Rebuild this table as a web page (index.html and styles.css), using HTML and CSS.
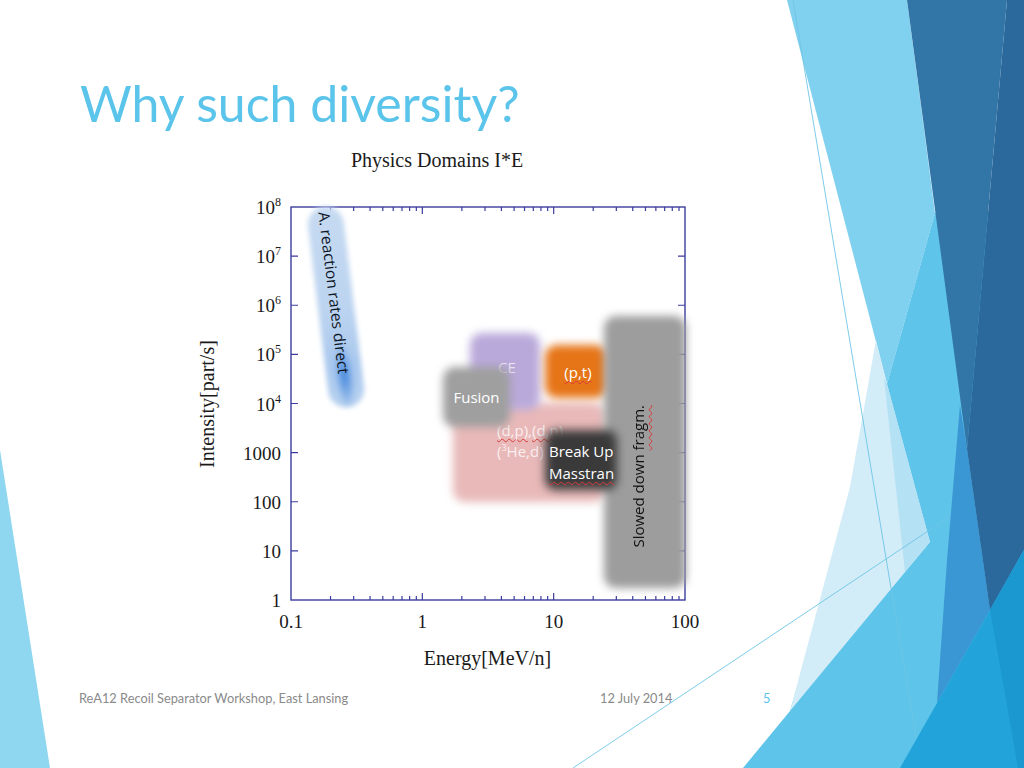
FILE: index.html
```html
<!DOCTYPE html>
<html lang="en">
<head>
<meta charset="utf-8">
<title>Why such diversity?</title>
<link rel="stylesheet" href="styles.css">
</head>
<body>
<div class="slide">
  <svg class="deco" viewBox="0 0 1024 768" width="1024" height="768" aria-hidden="true">
    <polygon points="0,450 50,768 0,768" fill="#8fd6f1"/>
    <polygon points="787,0 907,0 935,213 887,384" fill="#80d0ef"/>
    <polygon points="935,213 1024,213 1024,768 743,768 790,711 887,384" fill="#5ec4ea"/>
    <polygon points="876,340 887,384 930,542 790,711 850,487" fill="#d2ecf8"/>
    <polygon points="884,378 887,384 930,542 905,572" fill="#b4e1f4"/>
    <line x1="793" y1="0" x2="921" y2="768" stroke="#6fc5e7" stroke-width="0.9"/>
    <line x1="573" y1="768" x2="1024" y2="467" stroke="#6fc5e7" stroke-width="0.9"/>
    <polygon points="960,405 967,449 990,610 937,703 947,560" fill="#3b97d3"/>
    <polygon points="907,0 1007,0 967,449" fill="#3275a7"/>
    <polygon points="1007,0 1024,0 1024,550 990,610 967,449" fill="#2b699c"/>
    <polygon points="900,768 990,610 1024,550 1024,768" fill="#22a4db"/>
    <polygon points="990,610 1024,550 1024,768 1018,768" fill="#1c98d0"/>
  </svg>

  <main class="content">
    <h1 class="title">Why such diversity?</h1>

    <figure class="chart">
      <svg class="axes" width="520" height="540" viewBox="0 0 520 540">
        <text class="chart-title" x="247" y="27">Physics Domains I*E</text>
        <rect x="101" y="67" width="394" height="393" fill="none" stroke="#3c3c9e" stroke-width="1.4"/>
        <path stroke="#3c3c9e" stroke-width="1.2" fill="none" d="
          M140.53 460v-4M163.66 460v-4M180.07 460v-4M192.8 460v-4M203.19 460v-4M211.98 460v-4M219.6 460v-4M226.32 460v-4
          M271.86 460v-4M294.99 460v-4M311.4 460v-4M324.13 460v-4M334.52 460v-4M343.31 460v-4M350.93 460v-4M357.65 460v-4
          M403.2 460v-4M426.33 460v-4M442.74 460v-4M455.47 460v-4M465.86 460v-4M474.65 460v-4M482.27 460v-4M488.99 460v-4
          M140.53 67v4M163.66 67v4M180.07 67v4M192.8 67v4M203.19 67v4M211.98 67v4M219.6 67v4M226.32 67v4
          M271.86 67v4M294.99 67v4M311.4 67v4M324.13 67v4M334.52 67v4M343.31 67v4M350.93 67v4M357.65 67v4
          M403.2 67v4M426.33 67v4M442.74 67v4M455.47 67v4M465.86 67v4M474.65 67v4M482.27 67v4M488.99 67v4
          M232.33 460v-7M363.67 460v-7M232.33 67v7M363.67 67v7
          M101 410.88h7M101 361.75h7M101 312.63h7M101 263.5h7M101 214.38h7M101 165.25h7M101 116.13h7
          M495 410.88h-7M495 361.75h-7M495 312.63h-7M495 263.5h-7M495 214.38h-7M495 165.25h-7M495 116.13h-7"/>
        <g class="ylab">
          <text x="91" y="467">1</text>
          <text x="91" y="417.9">10</text>
          <text x="91" y="368.8">100</text>
          <text x="91" y="319.6">1000</text>
          <text x="91" y="270.5">10<tspan class="sup" dy="-8">4</tspan></text>
          <text x="91" y="221.4">10<tspan class="sup" dy="-8">5</tspan></text>
          <text x="91" y="172.3">10<tspan class="sup" dy="-8">6</tspan></text>
          <text x="91" y="123.1">10<tspan class="sup" dy="-8">7</tspan></text>
          <text x="91" y="74">10<tspan class="sup" dy="-8">8</tspan></text>
        </g>
        <g class="xlab">
          <text x="101" y="488">0.1</text>
          <text x="232.33" y="488">1</text>
          <text x="363.67" y="488">10</text>
          <text x="495" y="488">100</text>
        </g>
        <text class="axis-title" x="297.5" y="525">Energy[MeV/n]</text>
        <text class="axis-title" x="24" y="264" transform="rotate(-90 24 264)">Intensity[part/s]</text>
      </svg>

      <div class="blob pill"><span class="pill-text">A. reaction rates direct</span></div>
      <div class="blob pink">
        <span class="blob-text pink-text"><span class="sq">(d,p)</span>,<span class="sq">(d,n)</span><br>(<sup>3</sup>He,d)</span>
      </div>
      <div class="blob purple"><span class="blob-text ce">CE</span></div>
      <div class="blob orange"><span class="blob-text"><span class="sq">(p,t)</span></span></div>
      <div class="blob column"><span class="column-text">Slowed down <span class="sq">fragm.</span></span></div>
      <div class="blob fusion"><span class="blob-text">Fusion</span></div>
      <div class="blob dark"><span class="blob-text dark-text">Break Up<br><span class="sq">Masstran</span></span></div>
    </figure>

    <footer class="footer">
      <span>ReA12 Recoil Separator Workshop, East Lansing</span>
      <span>12 July 2014</span>
      <span class="num">5</span>
    </footer>
  </main>
</div>
</body>
</html>
```

FILE: styles.css
```css
* { box-sizing: border-box; }
html, body { margin: 0; padding: 0; }
body { background: #ffffff; }

.slide {
  position: relative;
  width: 1024px;
  height: 768px;
  overflow: hidden;
  background: #ffffff;
}

.deco {
  position: absolute;
  left: 0;
  top: 0;
  display: block;
}

.content {
  position: relative;
  display: flex;
  flex-direction: column;
  height: 768px;
  padding: 73px 0 0 79px;
}

.title {
  margin: 0;
  padding-left: 1px;
  font-family: Lato, "Open Sans", sans-serif;
  font-weight: 400;
  font-size: 50px;
  line-height: 60px;
  color: #5bc4ea;
}

.chart {
  position: relative;
  margin: 7px 0 0 111px;
  width: 520px;
  height: 540px;
}

.axes { display: block; }

.axes text {
  font-family: "Liberation Serif", "Times New Roman", serif;
  fill: #1a1a1a;
}

.chart-title { font-size: 20px; text-anchor: middle; }
.ylab text { font-size: 19px; text-anchor: end; }
.ylab .sup { font-size: 12px; }
.xlab text { font-size: 19px; text-anchor: middle; }
.axis-title { font-size: 20px; text-anchor: middle; }

/* blurred domain blobs */
.blob {
  position: absolute;
  display: flex;
  font-family: "Open Sans", sans-serif;
  font-size: 15px;
  color: #ffffff;
}

.blob::before {
  content: "";
  position: absolute;
  inset: 0;
  border-radius: 12px;
  background: var(--c);
  filter: blur(4px);
}

.blob-text, .pill-text, .column-text { position: relative; }

.sq {
  text-decoration: underline wavy #d83a3a;
  text-decoration-thickness: 1px;
  text-underline-offset: 2px;
  text-decoration-skip-ink: none;
}

.pill {
  left: 128px;
  top: 66px;
  width: 36px;
  height: 202px;
  transform: rotate(-7deg);
  justify-content: center;
  padding-top: 5px;
}
.pill::before {
  border-radius: 18px;
  background:
    radial-gradient(ellipse 10px 34px at 50% 84%, rgba(60, 130, 220, 0.95), rgba(80, 140, 225, 0) 100%),
    linear-gradient(180deg, #c6daf1 0%, #bcd4f0 50%, #a9c8ee 80%, #b9d2ef 100%);
  filter: blur(2.5px);
}
.pill-text {
  writing-mode: vertical-rl;
  font-size: 15.5px;
  line-height: 36px;
  color: #0f1626;
  white-space: nowrap;
}

.pink {
  --c: #e9b9b9;
  left: 263px;
  top: 263px;
  width: 152px;
  height: 99px;
  padding: 17px 0 0 44px;
}
.pink-text {
  line-height: 21px;
  color: #fbeff0;
}
.pink-text sup { font-size: 9px; vertical-align: 6px; line-height: 0; }

.purple {
  --c: #b9a9da;
  left: 280px;
  top: 193px;
  width: 70px;
  height: 77px;
  justify-content: center;
  align-items: center;
  padding: 0 0 10px 4px;
}
.ce { color: #eee6f6; }

.orange {
  --c: #e67518;
  left: 355px;
  top: 205px;
  width: 62px;
  height: 53px;
  justify-content: center;
  align-items: center;
  padding-left: 4px;
}

.column {
  --c: #9d9d9d;
  left: 414px;
  top: 176px;
  width: 82px;
  height: 272px;
  justify-content: center;
  align-items: flex-end;
  padding: 0 14px 40px 0;
}
.column-text {
  writing-mode: vertical-rl;
  transform: rotate(180deg);
  color: #111111;
  line-height: 20px;
  white-space: nowrap;
}

.fusion {
  --c: #9f9f9f;
  left: 253px;
  top: 227px;
  width: 67px;
  height: 60px;
  justify-content: center;
  align-items: center;
}

.dark {
  --c: #3a3a3a;
  left: 355px;
  top: 290px;
  width: 72px;
  height: 60px;
  padding: 10px 0 0 4px;
}
.dark::before { filter: blur(5px); border-radius: 10px; }
.dark-text { line-height: 22px; white-space: nowrap; }

.footer {
  display: grid;
  grid-template-columns: 521px 163px auto;
  margin-top: 10px;
  font-family: Lato, "Open Sans", sans-serif;
  font-size: 12.8px;
  line-height: 16px;
  color: #8a8a8a;
}
.num { color: #5bc4ea; }
```
